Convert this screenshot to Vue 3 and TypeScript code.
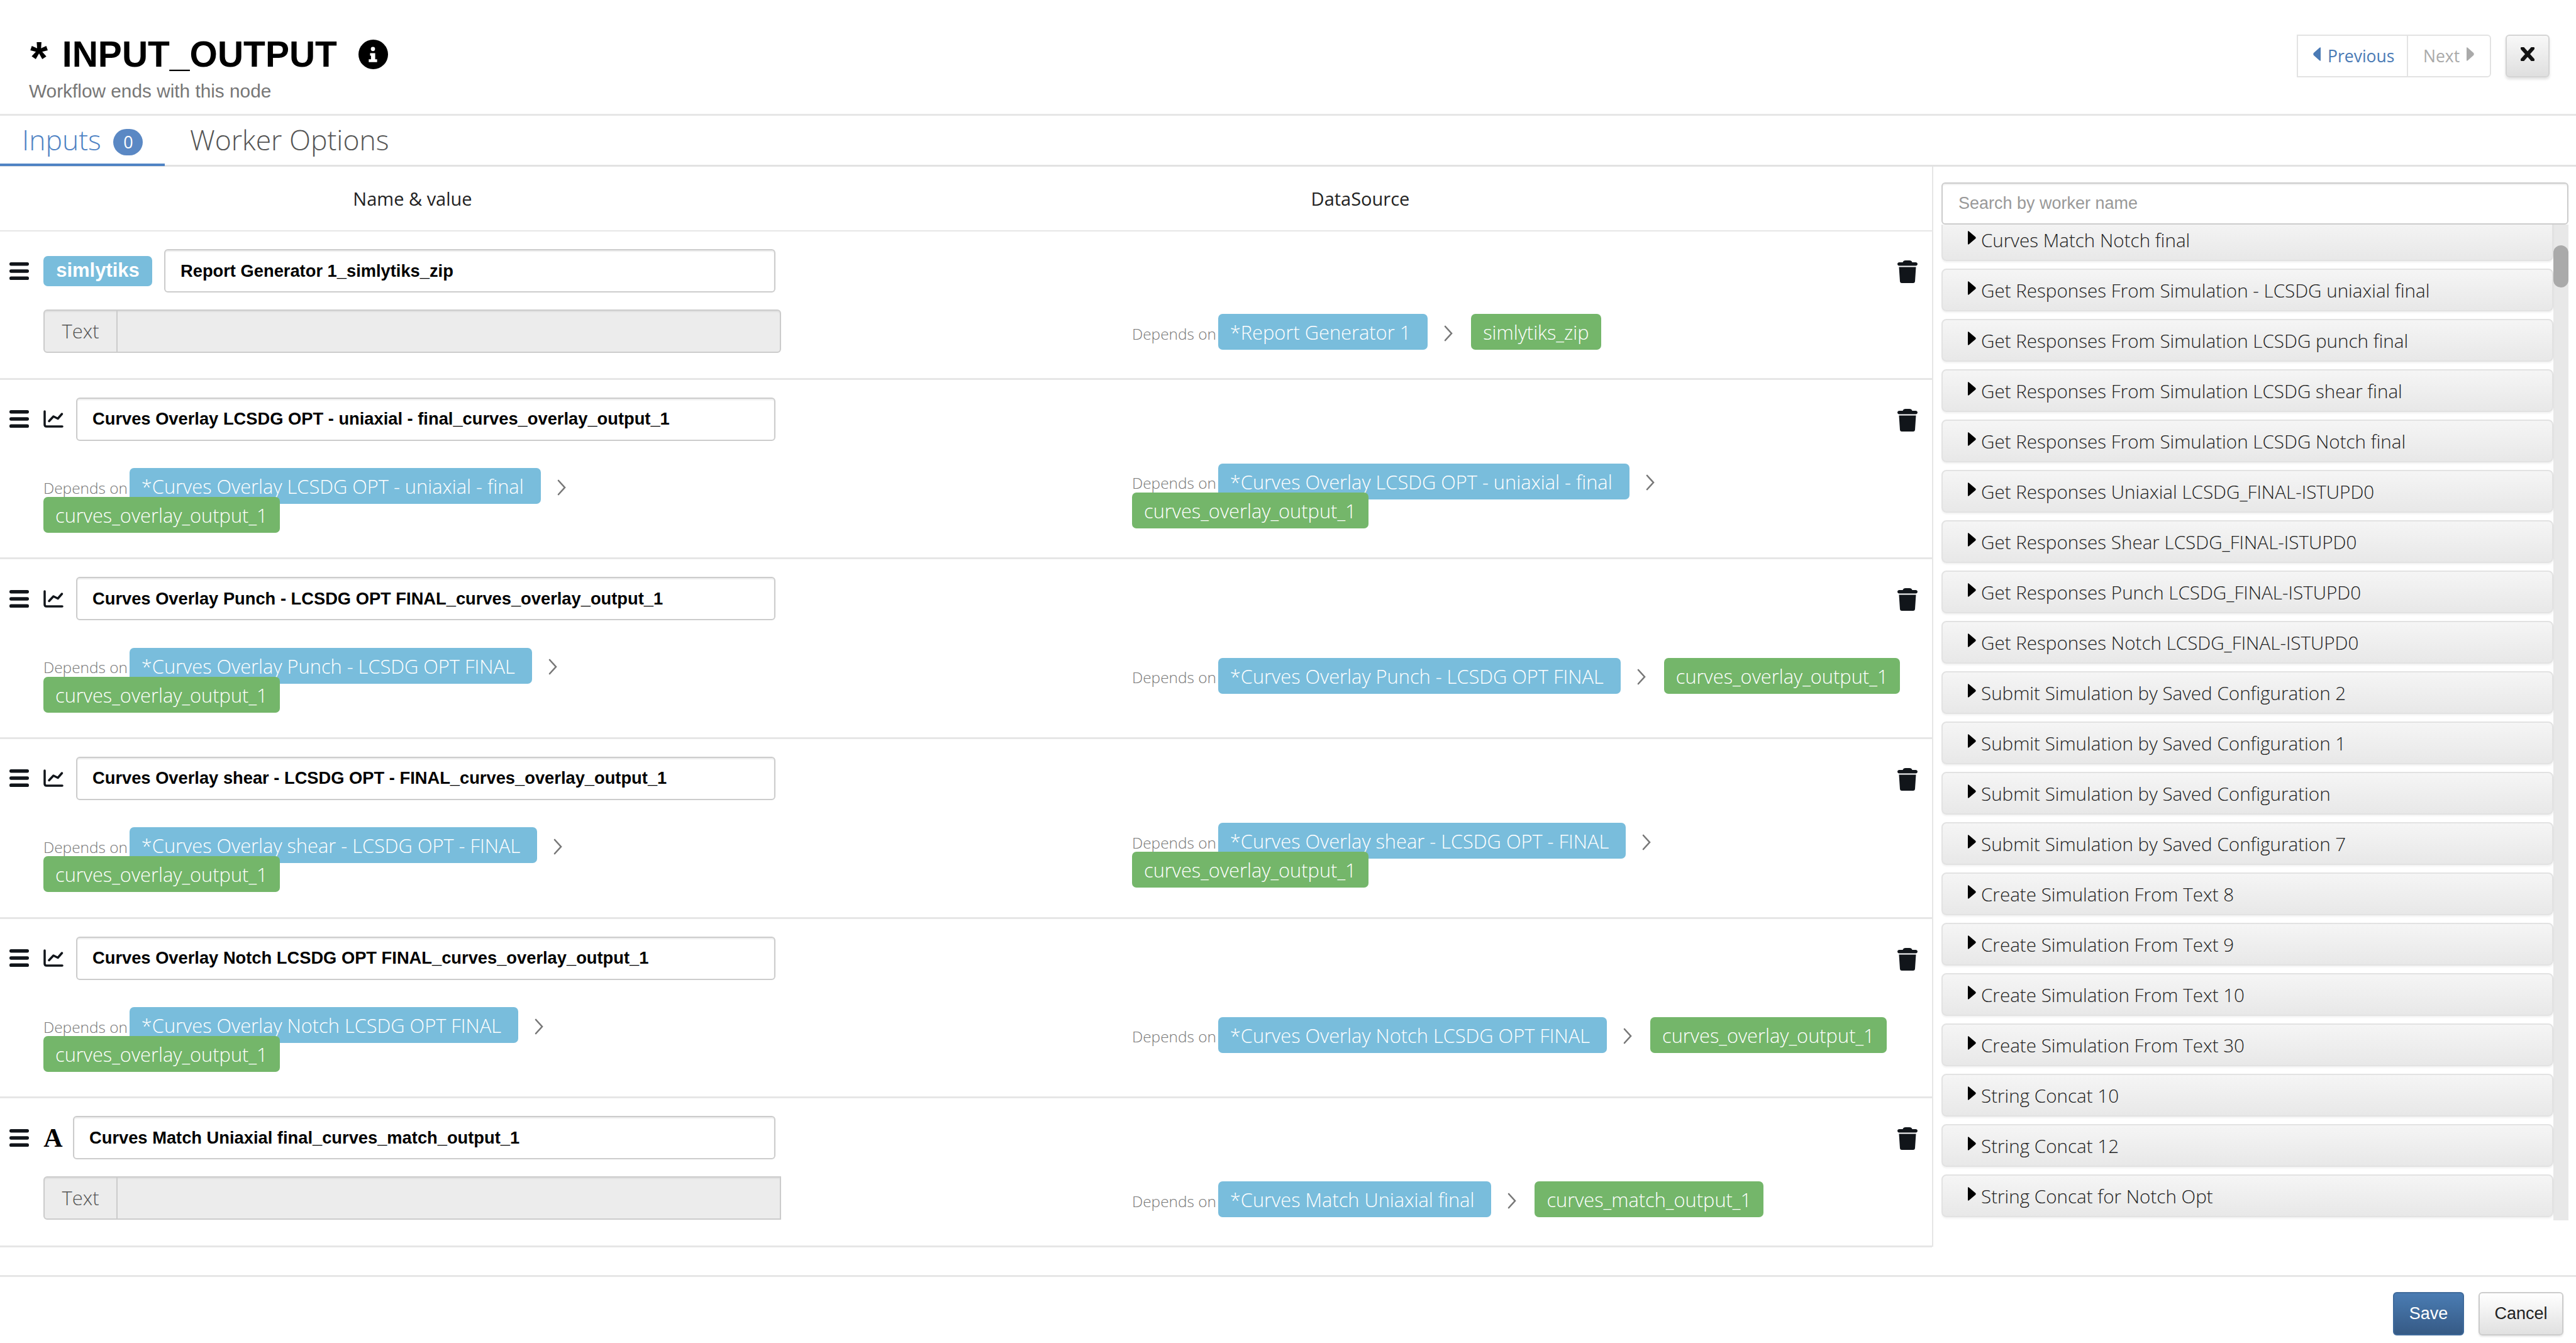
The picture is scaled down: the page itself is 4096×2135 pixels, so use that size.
<script setup lang="ts">
interface Row {
  kind: 'label' | 'chart' | 'text'
  name: string
  source: string
  output: string
  hasText: boolean
}

const rows: Row[] = [
  { kind: 'label', name: 'Report Generator 1_simlytiks_zip', source: '*Report Generator 1', output: 'simlytiks_zip', hasText: true },
  { kind: 'chart', name: 'Curves Overlay LCSDG OPT - uniaxial - final_curves_overlay_output_1', source: '*Curves Overlay LCSDG OPT - uniaxial - final', output: 'curves_overlay_output_1', hasText: false },
  { kind: 'chart', name: 'Curves Overlay Punch - LCSDG OPT FINAL_curves_overlay_output_1', source: '*Curves Overlay Punch - LCSDG OPT FINAL', output: 'curves_overlay_output_1', hasText: false },
  { kind: 'chart', name: 'Curves Overlay shear - LCSDG OPT - FINAL_curves_overlay_output_1', source: '*Curves Overlay shear - LCSDG OPT - FINAL', output: 'curves_overlay_output_1', hasText: false },
  { kind: 'chart', name: 'Curves Overlay Notch LCSDG OPT FINAL_curves_overlay_output_1', source: '*Curves Overlay Notch LCSDG OPT FINAL', output: 'curves_overlay_output_1', hasText: false },
  { kind: 'text', name: 'Curves Match Uniaxial final_curves_match_output_1', source: '*Curves Match Uniaxial final', output: 'curves_match_output_1', hasText: true },
]

const workers: string[] = [
  'Curves Match Notch final',
  'Get Responses From Simulation - LCSDG uniaxial final',
  'Get Responses From Simulation LCSDG punch final',
  'Get Responses From Simulation LCSDG shear final',
  'Get Responses From Simulation LCSDG Notch final',
  'Get Responses Uniaxial LCSDG_FINAL-ISTUPD0',
  'Get Responses Shear LCSDG_FINAL-ISTUPD0',
  'Get Responses Punch LCSDG_FINAL-ISTUPD0',
  'Get Responses Notch LCSDG_FINAL-ISTUPD0',
  'Submit Simulation by Saved Configuration 2',
  'Submit Simulation by Saved Configuration 1',
  'Submit Simulation by Saved Configuration',
  'Submit Simulation by Saved Configuration 7',
  'Create Simulation From Text 8',
  'Create Simulation From Text 9',
  'Create Simulation From Text 10',
  'Create Simulation From Text 30',
  'String Concat 10',
  'String Concat 12',
  'String Concat for Notch Opt',
]
</script>

<template>
  <div class="page">
    <header class="head">
      <div class="head-left">
        <div class="title">
          <h1><span class="star">*</span> INPUT_OUTPUT</h1>
          <svg class="info" viewBox="0 0 46 46">
            <circle cx="23" cy="23" r="23" fill="#000" />
            <circle cx="22.500" cy="14.500" r="3.300" fill="#fff" />
            <path d="M18 21h8v9.500h3v4.500H16v-4.500h3.500V25H18z" fill="#fff" />
          </svg>
        </div>
        <p class="sub">Workflow ends with this node</p>
      </div>
      <div class="head-right">
        <div class="pager">
          <span class="pg prev">
            <svg class="pcaret" viewBox="0 0 12 22"><path d="M12 1v20c0 1-1 1-2 0L1 13c-1-1-1-3 0-4l9-8c1-1 2-1 2 0z" fill="#4a7ab5" />
            </svg>Previous
          </span>
          <span class="pg next">Next<svg class="pcaret after" viewBox="0 0 12 22"><path d="M0 1v20c0 1 1 1 2 0l9-8c1-1 1-3 0-4L2 1C1 0 0 0 0 1z" fill="#aaa" /></svg></span>
        </div>
        <button class="close" type="button">
          <svg viewBox="0 0 22 22"><path d="M3 2l16 18M19 2L3 20" stroke="#111" stroke-width="6" stroke-linecap="round" fill="none" /></svg>
        </button>
      </div>
    </header>

    <nav class="tabs">
      <div class="tab active">Inputs <span class="badge">0</span></div>
      <div class="tab">Worker Options</div>
    </nav>

    <div class="main">
      <section class="table">
        <div class="cols">
          <div class="col-name">Name &amp; value</div>
          <div class="col-src">DataSource</div>
        </div>
        <div
          v-for="(row, i) in rows"
          :key="i"
          class="row"
          :class="{ first: i === 0, last: i === rows.length - 1 }"
        >
          <div class="left">
            <div class="name-line">
              <svg class="bars" viewBox="0 0 31 28">
                <rect x="0" y="0" width="31" height="5.400" rx="2.600" />
                <rect x="0" y="11.300" width="31" height="5.400" rx="2.600" />
                <rect x="0" y="22.600" width="31" height="5.400" rx="2.600" />
              </svg>
              <span v-if="row.kind === 'label'" class="kind-label">simlytiks</span>
              <svg v-else-if="row.kind === 'chart'" class="chart" viewBox="0 0 32 28">
                <path d="M2 2v21c0 2 1 3 3 3h25" fill="none" stroke="#11151a" stroke-width="3.500" stroke-linecap="round" />
                <path d="M9 17.500L16 10l7 3.500L29.500 6" fill="none" stroke="#11151a" stroke-width="3.500" stroke-linejoin="round" stroke-linecap="round" />
              </svg>
              <span v-else class="kind-a">A</span>
              <input class="name" :value="row.name" readonly />
            </div>
            <div v-if="row.hasText" class="text-group">
              <span class="addon">Text</span>
              <span class="ghost"></span>
            </div>
            <div v-else class="dep dep-left">
              <span class="dep-t">Depends on</span>
              <span class="tag blue">{{ row.source }}</span>
              <svg class="chev" viewBox="0 0 16 26"><path d="M3 2l10 11-10 11" fill="none" stroke="#777" stroke-width="2.600" stroke-linecap="round" /></svg>
              <span class="tag green">{{ row.output }}</span>
            </div>
          </div>
          <div class="right">
            <div class="dep">
              <span class="dep-t">Depends on</span>
              <span class="tag blue">{{ row.source }}</span>
              <svg class="chev" viewBox="0 0 16 26"><path d="M3 2l10 11-10 11" fill="none" stroke="#777" stroke-width="2.600" stroke-linecap="round" /></svg>
              <span class="tag green">{{ row.output }}</span>
            </div>
          </div>
          <div class="act">
            <svg class="trash" viewBox="0 0 32 36">
              <path d="M13 0h6c2.500 0 4 1.200 4.500 3H29c1.700 0 3 1.200 3 2.700S30.700 8.500 29 8.500H3C1.300 8.500 0 7.200 0 5.700S1.300 3 3 3h5.500C9 1.200 10.500 0 13 0zM2.500 10.500h27L28 33c-.1 1.800-1.200 3-3 3H7c-1.800 0-2.900-1.200-3-3z" fill="#11151a" />
            </svg>
          </div>
        </div>
      </section>

      <aside class="side">
        <input class="search" placeholder="Search by worker name" />
        <div class="list">
          <div class="list-in">
            <div v-for="w in workers" :key="w" class="worker">
              <svg class="wcaret" viewBox="0 0 13 22"><path d="M0 1.500v19c0 1.500 1 1.500 2 .5l10-8.500c1-.8 1-2.200 0-3L2 1C1 0 0 0 0 1.500z" fill="#000" /></svg>
              <span>{{ w }}</span>
            </div>
          </div>
          <div class="thumb"></div>
        </div>
      </aside>
    </div>

    <footer class="foot">
      <button class="btn save" type="button">Save</button>
      <button class="btn cancel" type="button">Cancel</button>
    </footer>
  </div>
</template>

<style>
html, body { margin: 0; background: #fff; overflow: hidden; }
</style>

<style scoped>
* { box-sizing: border-box; }
.page {
  width: 4096px;
  height: 2135px;
  display: flex;
  flex-direction: column;
  background: #fff;
  color: #333;
  font-family: "Open Sans", sans-serif;
  overflow: hidden;
}
.head {
  height: 184px;
  flex: none;
  display: flex;
  justify-content: space-between;
  border-bottom: 3px solid #e6e6e6;
}
.head-left { padding: 60px 0 0 46px; }
.title { display: flex; align-items: center; gap: 34px; height: 52px; }
h1 {
  margin: 0 0 0 2px;
  font: bold 57px/52px "Liberation Sans", sans-serif;
  word-spacing: 7px;
  color: #000;
  white-space: nowrap;
}
.star {
  font-size: 72px;
  line-height: 0;
  vertical-align: -11px;
}
.info { width: 47px; height: 47px; }
.sub {
  margin: 16px 0 0;
  font: 29.800px/34px "Liberation Sans", sans-serif;
  color: #777;
}
.head-right { display: flex; gap: 23px; padding: 55px 42px 0 0; align-items: flex-start; }
.pager {
  display: flex;
  height: 68px;
  border: 2px solid #e3e3e3;
  border-radius: 0 6px 6px 0;
  font-size: 26.500px;
}
.pg { display: flex; align-items: center; padding: 0 24px; gap: 11px; }
.prev { width: 175px; color: #4a7ab5; border-right: 2px solid #e3e3e3; }
.next { color: #aaa; width: 130px; padding: 0 26px 0 24px; }
.pcaret { width: 12px; height: 22px; flex: none; margin-top: -6px; }
.close {
  width: 70px;
  height: 68px;
  padding: 0;
  border: 2px solid #d4d4d4;
  border-radius: 6px;
  background: linear-gradient(#f8f8f8, #dfdfdf);
  box-shadow: 0 3px 4px rgba(0, 0, 0, .12);
  display: flex;
  align-items: center;
  justify-content: center;
}
.close svg { width: 22px; height: 22px; margin-top: -6px; }
.tabs {
  height: 81px;
  flex: none;
  display: flex;
  border-bottom: 3px solid #e2e2e2;
}
.tab {
  height: 80px;
  padding: 0 40px;
  font-weight: 300;
  font-size: 44.500px;
  line-height: 76px;
  color: #555;
  white-space: nowrap;
}
.tab.active {
  width: 262px;
  padding: 0 0 0 35px;
  color: #4f83c4;
  border-bottom: 4px solid #4f83c4;
}
.badge {
  display: inline-block;
  width: 47px;
  height: 42px;
  margin-left: 8px;
  border-radius: 21px;
  background: #5a88c4;
  color: #fff;
  font-size: 27px;
  font-weight: 400;
  line-height: 42px;
  text-align: center;
  vertical-align: 3px;
}
.main { flex: none; height: 1717px; display: flex; }
.table { width: 3072px; flex: none; }
.cols {
  height: 103px;
  display: grid;
  grid-template-columns: 1312px 1702px;
  align-items: center;
  text-align: center;
  border-bottom: 2px solid #e6e6e6;
  font-size: 29px;
  color: #222;
}
.row {
  height: 285.700px;
  display: grid;
  grid-template-columns: 1800px 1226px 46px;
  border-bottom: 3px solid #e6e6e6;
}
.row.first { height: 235.500px; }
.row.last { height: 237px; }
.left { padding: 28px 0 0 15px; }
.name-line { width: 1218px; display: flex; align-items: center; }
.bars { width: 31px; height: 28px; flex: none; fill: #11151a; margin-right: 23px; }
.kind-label {
  flex: none;
  width: 173px;
  height: 48px;
  margin-right: 19px;
  border-radius: 7px;
  background: #79bddc;
  color: #fff;
  font: bold 31px/46px "Liberation Sans", sans-serif;
  text-align: center;
}
.chart { width: 32px; height: 28px; flex: none; margin-right: 20px; }
.kind-a {
  flex: none;
  width: 31px;
  margin-right: 16px;
  font: bold 42px/1 "Liberation Serif", serif;
  color: #000;
  text-align: center;
}
.name {
  flex: 1;
  min-width: 0;
  height: 69px;
  padding: 0 24px;
  border: 2px solid #ccc;
  border-radius: 6px;
  box-shadow: inset 0 2px 2px rgba(0, 0, 0, .08);
  background: #fff;
  color: #000;
  font: bold 27.300px "Liberation Sans", sans-serif;
  outline: none;
}
.text-group {
  display: flex;
  width: 1173px;
  height: 69px;
  margin: 27px 0 0 54px;
  border: 2px solid #ccc;
  border-radius: 6px;
  background: #ececec;
  box-shadow: inset 0 2px 2px rgba(0, 0, 0, .06);
}
.last .text-group { border-radius: 6px 0 0 6px; }
.addon {
  width: 116px;
  border-right: 2px solid #ccc;
  font-size: 31px;
  font-weight: 300;
  line-height: 65px;
  text-align: center;
  color: #555;
}
.ghost { flex: 1; }
.dep { line-height: 46px; font-size: 30.800px; }
.dep-left { width: 1173px; margin: 49px 0 0 54px; }
.dep-t {
  font-size: 24.400px;
  line-height: 1;
  font-weight: 300;
  color: #777;
}
.tag {
  padding: 7.500px 19px;
  border-radius: 7px;
  color: #fff;
  font-weight: 300;
  white-space: nowrap;
}
.blue { background: #79bddc; margin-left: 3px; padding-right: 27px; }
.green { background: #74b66a; }
.chev { width: 16px; height: 26px; margin: 0 28px 0 25px; vertical-align: -3px; }
.right { align-self: center; padding-top: 87px; }
.act { padding-top: 46px; }
.trash { display: block; width: 32px; height: 36px; margin-left: -9px; }
.side {
  width: 1024px;
  flex: none;
  height: 1717px;
  border-left: 2px solid #e6e6e6;
  padding: 25px 12px 0 13px;
}
.search {
  display: block;
  width: 100%;
  height: 67px;
  padding: 0 25px;
  border: 2px solid #ccc;
  border-radius: 6px;
  box-shadow: inset 0 2px 2px rgba(0, 0, 0, .07);
  font: 27px "Liberation Sans", sans-serif;
  outline: none;
}
.search::placeholder { color: #999; opacity: 1; }
.list {
  position: relative;
  height: 1583px;
  overflow: hidden;
  padding-right: 24px;
  background: linear-gradient(#e8e8e8, #e8e8e8) right top / 24px 100% no-repeat;
}
.list-in { margin-top: -10px; display: flex; flex-direction: column; gap: 12px; }
.worker {
  flex: none;
  height: 68px;
  display: flex;
  align-items: center;
  padding-left: 40px;
  border: 2px solid #e2e2e2;
  border-radius: 8px;
  background: linear-gradient(#f5f5f5, #e8e8e8);
  box-shadow: 0 2px 3px rgba(0, 0, 0, .06);
  font-size: 29.600px;
  font-weight: 300;
  color: #222;
  white-space: nowrap;
}
.wcaret { width: 13px; height: 22px; margin-right: 8px; margin-top: -6px; flex: none; }
.thumb {
  position: absolute;
  right: 0;
  top: 33px;
  width: 24px;
  height: 67px;
  border-radius: 12px;
  background: #aaa;
}
.foot {
  flex: 1;
  margin-top: 45px;
  border-top: 3px solid #e6e6e6;
  display: flex;
  justify-content: flex-end;
  gap: 23px;
  padding: 24px 20px 0 0;
}
.btn {
  height: 69px;
  font: 27px "Liberation Sans", sans-serif;
  border-radius: 6px;
  padding: 0;
}
.save {
  width: 113px;
  border: 2px solid #3f6a9b;
  background: linear-gradient(#4a7cb3, #365a85);
  color: #fff;
}
.cancel {
  width: 135px;
  border: 2px solid #ccc;
  background: linear-gradient(#fff, #e0e0e0);
  color: #222;
  box-shadow: 0 2px 3px rgba(0, 0, 0, .1);
}
</style>
